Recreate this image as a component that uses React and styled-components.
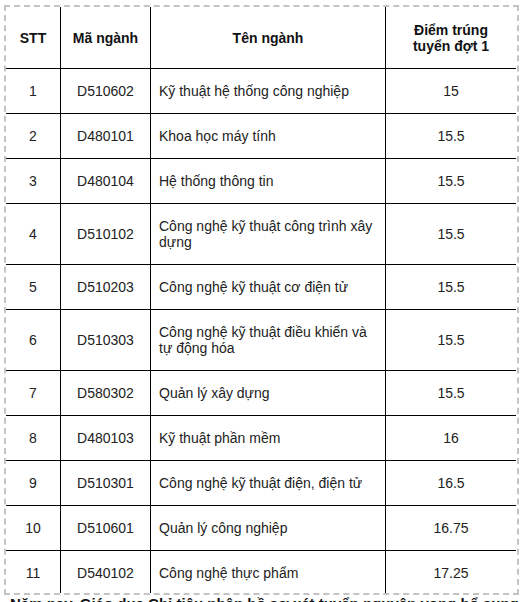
import styled, { createGlobalStyle } from "styled-components";

const GlobalStyle = createGlobalStyle`
    html, body {
        margin: 0;
        padding: 0;
        background: #ffffff;
        overflow: hidden;
    }
    body {
        font-family: "Liberation Sans", Arial, sans-serif;
    }
`;

const rows = [
    { stt: "1", code: "D510602", name: "Kỹ thuật hệ thống công nghiệp", score: "15" },
    { stt: "2", code: "D480101", name: "Khoa học máy tính", score: "15.5" },
    { stt: "3", code: "D480104", name: "Hệ thống thông tin", score: "15.5" },
    { stt: "4", code: "D510102", name: "Công nghệ kỹ thuật công trình xây dựng", score: "15.5" },
    { stt: "5", code: "D510203", name: "Công nghệ kỹ thuật cơ điện tử", score: "15.5" },
    { stt: "6", code: "D510303", name: "Công nghệ kỹ thuật điều khiển và tự động hóa", score: "15.5" },
    { stt: "7", code: "D580302", name: "Quản lý xây dựng", score: "15.5" },
    { stt: "8", code: "D480103", name: "Kỹ thuật phần mềm", score: "16" },
    { stt: "9", code: "D510301", name: "Công nghệ kỹ thuật điện, điện tử", score: "16.5" },
    { stt: "10", code: "D510601", name: "Quản lý công nghiệp", score: "16.75" },
    { stt: "11", code: "D540102", name: "Công nghệ thực phẩm", score: "17.25" },
];

export default function App() {
    return (
        <Page>
            <GlobalStyle />
            <Frame>
                <Table>
                    <colgroup>
                        <col style={{ width: 55 }} />
                        <col style={{ width: 90 }} />
                        <col style={{ width: 235 }} />
                        <col style={{ width: 130 }} />
                    </colgroup>
                    <thead>
                        <tr>
                            <Th>STT</Th>
                            <Th>Mã ngành</Th>
                            <Th>Tên ngành</Th>
                            <Th $last>Điểm trúng<br />tuyển đợt 1</Th>
                        </tr>
                    </thead>
                    <tbody>
                        {rows.map((r) => (
                            <Row key={r.stt}>
                                <Td>{r.stt}</Td>
                                <Td>{r.code}</Td>
                                <Td $left>{r.name}</Td>
                                <Td $last>{r.score}</Td>
                            </Row>
                        ))}
                    </tbody>
                </Table>
            </Frame>
            <Note>Năm nay, Giáo dục Chỉ tiêu nhận hồ sơ xét tuyển nguyện vọng bổ sung đợt 2 như sau:</Note>
        </Page>
    );
}

const Page = styled.div`
    height: 602px;
    overflow: hidden;
    padding: 5px 0 0 4px;
    box-sizing: border-box;
`;

const Frame = styled.div`
    width: 511px;
    height: 586px;
    border: 2px dashed #c4c4c4;
    overflow: hidden;
`;

const Table = styled.table`
    width: 510px;
    table-layout: fixed;
    border-collapse: separate;
    border-spacing: 0;
    color: #222;
    font-size: 14px;
    line-height: 16px;
`;

const Th = styled.th`
    box-sizing: border-box;
    padding: 15px 6px 14px;
    font-weight: bold;
    text-align: center;
    color: #111;
    border-bottom: 1px solid #000;
    border-right: ${(p) => (p.$last ? "none" : "1px solid #000")};
`;

const Td = styled.td`
    box-sizing: border-box;
    padding: 14px 8px;
    text-align: ${(p) => (p.$left ? "left" : "center")};
    vertical-align: middle;
    border-bottom: 1px solid #000;
    border-right: ${(p) => (p.$last ? "none" : "1px solid #000")};
`;

const Row = styled.tr`
    &:last-child td {
        border-bottom: none;
    }
`;

const Note = styled.p`
    margin: 0;
    padding-left: 6px;
    font-size: 15px;
    line-height: 18px;
    font-weight: bold;
    color: #111;
    white-space: nowrap;
`;
